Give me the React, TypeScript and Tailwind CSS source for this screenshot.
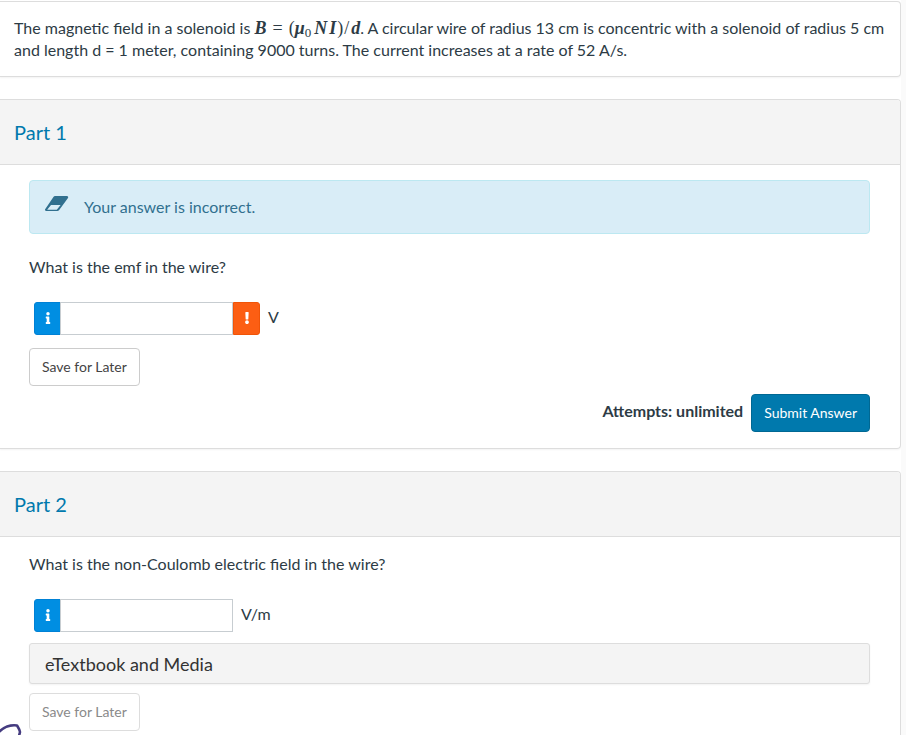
import React from "react";
import { FaExclamation, FaInfo } from "react-icons/fa";

const EraserIcon = () => (
  <svg width="24" height="16" viewBox="0 0 24 16" aria-hidden="true">
    <path
      fill="#31708f"
      fillRule="evenodd"
      d="M10 0h11.800a1.300 1.300 0 0 1 1 2.200L14 14.200a2.200 2.200 0 0 1-1.700.8H1.200a1.200 1.200 0 0 1-.9-2L8.600.7A2 2 0 0 1 10 0ZM6 9 2.200 13.700h9.600L15.600 9Z"
    />
  </svg>
);

const Formula = () => (
  <span className="inline-flex items-baseline whitespace-nowrap font-['Liberation_Serif',serif] text-[18px] leading-[22px]">
    <b className="italic">B</b>
    <span className="mx-[6px]">=</span>
    <span>(</span>
    <b className="italic">μ</b>
    <sub className="text-[13px] leading-none">0</sub>
    <b className="ml-[3px] italic">N</b>
    <b className="ml-[2px] italic">I</b>
    <span className="ml-px">)</span>
    <span className="ml-px">/</span>
    <b className="ml-[2px] italic">d</b>
  </span>
);

type AnswerProps = {
  id: string;
  label: string;
  unit: string;
  wrong?: boolean;
};

const AnswerField = ({ id, label, unit, wrong }: AnswerProps) => (
  <div>
    <label htmlFor={id} className="block">
      {label}
    </label>
    <div className="mt-6 ml-[5px] flex items-center">
      <button
        type="button"
        aria-label="Info"
        className="flex h-[33px] w-[27px] shrink-0 items-center justify-center rounded-l-[3px] border border-[#0081d5] bg-[#008ee2] pb-[2px] text-[12px] text-white"
      >
        <FaInfo />
      </button>
      <input
        type="text"
        id={id}
        className="-ml-px h-[33px] w-[173px] border border-[#c7cdd1] bg-white px-2 outline-none"
      />
      {wrong && (
        <span className="flex h-[33px] w-[27px] shrink-0 items-center justify-center rounded-r-[3px] border border-[#f05408] bg-[#fc5e13] pb-[2px] text-[12px] text-white">
          <FaExclamation />
        </span>
      )}
      <span className="ml-2 pb-1">{unit}</span>
    </div>
  </div>
);

const PartHeader = ({ title }: { title: string }) => (
  <div className="rounded-tr-[3px] border-b border-[#ddd] bg-[#f4f4f4] px-[14px] py-5">
    <h2 className="text-[20px] leading-6 text-[#0079ad]">{title}</h2>
  </div>
);

const App = () => {
  return (
    <div className="min-h-screen bg-[#fafafa] pr-[5px] font-['Lato',sans-serif] text-[16px] leading-[22px] text-[#2d3b45]">
      <main className="relative flex min-h-screen flex-col gap-[22px] overflow-hidden bg-white pt-px">
        <section className="rounded-r-[4px] border border-l-0 border-[#ddd] px-[14px] py-[15px] shadow-xs">
          <p>
            The magnetic field in a solenoid is <Formula />. A circular wire of
            radius 13 cm is concentric with a solenoid of radius 5 cm and
            length d = 1 meter, containing 9000 turns. The current increases at
            a rate of 52 A/s.
          </p>
        </section>

        <section className="rounded-r-[4px] border border-l-0 border-[#ddd] shadow-xs">
          <PartHeader title="Part 1" />
          <div className="pt-[15px] pr-[30px] pb-4 pl-[29px]">
            <div className="flex h-[54px] items-center rounded-[4px] border border-[#bce8f1] bg-[#d9edf7] px-[15px] text-[#31708f]">
              <div className="mb-1.5">
                <EraserIcon />
              </div>
              <p className="ml-[15px]">Your answer is incorrect.</p>
            </div>
            <div className="mt-[22px]">
              <AnswerField
                id="emf"
                label="What is the emf in the wire?"
                unit="V"
                wrong
              />
            </div>
            <button
              type="button"
              className="mt-[13px] block h-[38px] rounded-[4px] border border-[#ccc] bg-white px-3 text-[14px] text-[#444]"
            >
              Save for Later
            </button>
            <div className="mt-2 flex items-center justify-end gap-2">
              <span className="pb-1 font-bold">Attempts: unlimited</span>
              <button
                type="button"
                className="h-[38px] rounded-[4px] border border-[#006893] bg-[#0079ad] px-3 text-[14px] text-white"
              >
                Submit Answer
              </button>
            </div>
          </div>
        </section>

        <section className="grow rounded-tr-[4px] border-t border-r border-[#ddd]">
          <PartHeader title="Part 2" />
          <div className="pt-4 pr-[30px] pb-1 pl-[29px]">
            <AnswerField
              id="field"
              label="What is the non-Coulomb electric field in the wire?"
              unit="V/m"
            />
            <button
              type="button"
              className="mt-[11px] block h-[41px] w-full rounded-[3px] border border-[#ddd] bg-[#f4f4f4] px-[15px] text-left text-[18px] text-[#333] shadow-xs"
            >
              eTextbook and Media
            </button>
            <button
              type="button"
              disabled
              className="mt-[9px] block h-[38px] rounded-[4px] border border-[#ddd] bg-white px-3 text-[14px] text-[#8a8a8a]"
            >
              Save for Later
            </button>
          </div>
        </section>

        {/* pen stroke running off the corner */}
        <svg
          className="absolute bottom-0 left-0"
          width="24"
          height="12"
          viewBox="0 0 24 12"
          aria-hidden="true"
        >
          <path
            d="M-1 9C3 5 9 1.500 17 2.500 18.500 5 20 7 20 9L19 13"
            fill="none"
            stroke="#453c80"
            strokeWidth="2.600"
            strokeLinejoin="round"
          />
        </svg>
      </main>
    </div>
  );
};

export default App;
